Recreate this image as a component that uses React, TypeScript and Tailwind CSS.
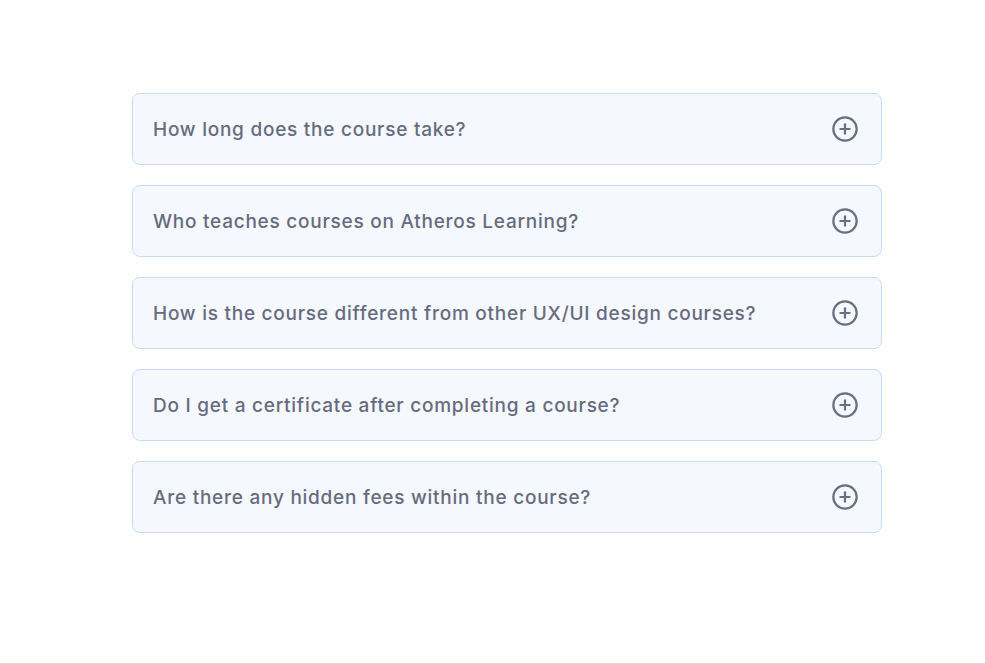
import { CirclePlus } from "lucide-react";

const questions = [
  "How long does the course take?",
  "Who teaches courses on Atheros Learning?",
  "How is the course different from other UX/UI design courses?",
  "Do I get a certificate after completing a course?",
  "Are there any hidden fees within the course?",
];

const FaqItem = ({ question }: { question: string }) => {
  return (
    <button
      type="button"
      className="flex h-[72px] w-full items-center justify-between rounded-lg border border-[#c4dcfb] bg-[#f5f8fe] pl-5 pr-[22px] text-left"
    >
      <span className="pt-[2px] text-[19px] font-medium tracking-[0.75px] text-[#676b7e]">{question}</span>
      <CirclePlus size={28} strokeWidth={1.9} className="text-[#6b6f82]" />
    </button>
  );
};

export default function App() {
  return (
    <div
      className="h-[664px] w-full border-b border-[#d9d9d9] bg-white pt-[93px]"
      style={{ fontFamily: "Inter, 'Noto Sans', sans-serif" }}
    >
      <div className="ml-[132px] flex w-[750px] flex-col gap-5">
        {questions.map((q) => (
          <FaqItem key={q} question={q} />
        ))}
      </div>
    </div>
  );
}
